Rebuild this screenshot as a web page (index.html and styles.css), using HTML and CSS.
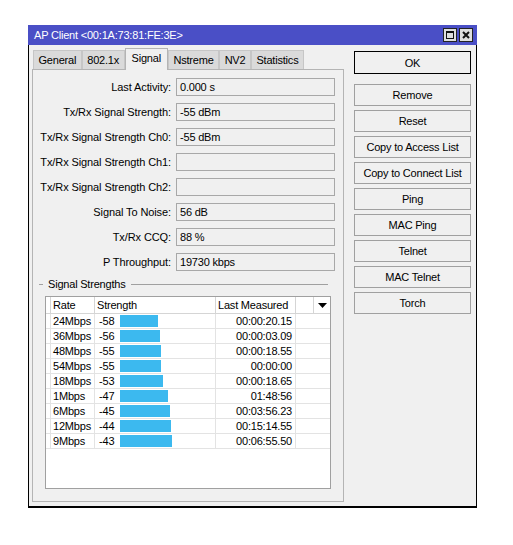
FILE: index.html
```html
<!DOCTYPE html>
<html>
<head>
<meta charset="utf-8">
<link rel="stylesheet" href="styles.css">
</head>
<body>
<div class="window">
  <div class="titlebar">
    <span class="title">AP Client &lt;00:1A:73:81:FE:3E&gt;</span>
    <div class="tbtns">
      <span class="tbtn"><svg width="12" height="12" viewBox="0 0 12 12"><rect x="2.5" y="2.5" width="7" height="7" fill="none" stroke="#111" stroke-width="1"/><rect x="2" y="2" width="8" height="2" fill="#111"/></svg></span>
      <span class="tbtn"><svg width="12" height="12" viewBox="0 0 12 12"><path d="M3 3 L9 9 M9 3 L3 9" stroke="#111" stroke-width="2" fill="none"/></svg></span>
    </div>
  </div>
  <div class="body">
    <div class="left">
      <div class="tabs">
        <div class="tab">General</div>
        <div class="tab">802.1x</div>
        <div class="tab active">Signal</div>
        <div class="tab">Nstreme</div>
        <div class="tab">NV2</div>
        <div class="tab">Statistics</div>
      </div>
      <div class="panel">
        <div class="form">
          <div class="row"><span class="lbl">Last Activity:</span><span class="field">0.000 s</span></div>
          <div class="row"><span class="lbl">Tx/Rx Signal Strength:</span><span class="field">-55 dBm</span></div>
          <div class="row"><span class="lbl">Tx/Rx Signal Strength Ch0:</span><span class="field">-55 dBm</span></div>
          <div class="row"><span class="lbl">Tx/Rx Signal Strength Ch1:</span><span class="field"></span></div>
          <div class="row"><span class="lbl">Tx/Rx Signal Strength Ch2:</span><span class="field"></span></div>
          <div class="row"><span class="lbl">Signal To Noise:</span><span class="field">56 dB</span></div>
          <div class="row"><span class="lbl">Tx/Rx CCQ:</span><span class="field">88 %</span></div>
          <div class="row"><span class="lbl">P Throughput:</span><span class="field">19730 kbps</span></div>
        </div>
        <div class="group">
          <div class="ghead"><span class="gdash"></span><span class="glabel">Signal Strengths</span><span class="gline"></span></div>
          <div class="list">
            <div class="lhead">
              <div></div>
              <div>Rate</div>
              <div>Strength</div>
              <div>Last Measured</div>
              <div></div>
              <div class="arrow"><svg width="9" height="5" viewBox="0 0 9 5"><polygon points="0,0 9,0 4.5,5" fill="#000"/></svg></div>
            </div>
            <div class="lrow"><div></div><div class="c-rate">24Mbps</div><div class="c-str"><span class="sval">-58</span><span class="bar" style="width:38px"></span></div><div class="c-time">00:00:20.15</div><div></div></div>
            <div class="lrow"><div></div><div class="c-rate">36Mbps</div><div class="c-str"><span class="sval">-56</span><span class="bar" style="width:40px"></span></div><div class="c-time">00:00:03.09</div><div></div></div>
            <div class="lrow"><div></div><div class="c-rate">48Mbps</div><div class="c-str"><span class="sval">-55</span><span class="bar" style="width:41px"></span></div><div class="c-time">00:00:18.55</div><div></div></div>
            <div class="lrow"><div></div><div class="c-rate">54Mbps</div><div class="c-str"><span class="sval">-55</span><span class="bar" style="width:41px"></span></div><div class="c-time">00:00:00</div><div></div></div>
            <div class="lrow"><div></div><div class="c-rate">18Mbps</div><div class="c-str"><span class="sval">-53</span><span class="bar" style="width:43px"></span></div><div class="c-time">00:00:18.65</div><div></div></div>
            <div class="lrow"><div></div><div class="c-rate">1Mbps</div><div class="c-str"><span class="sval">-47</span><span class="bar" style="width:48px"></span></div><div class="c-time">01:48:56</div><div></div></div>
            <div class="lrow"><div></div><div class="c-rate">6Mbps</div><div class="c-str"><span class="sval">-45</span><span class="bar" style="width:50px"></span></div><div class="c-time">00:03:56.23</div><div></div></div>
            <div class="lrow"><div></div><div class="c-rate">12Mbps</div><div class="c-str"><span class="sval">-44</span><span class="bar" style="width:51px"></span></div><div class="c-time">00:15:14.55</div><div></div></div>
            <div class="lrow"><div></div><div class="c-rate">9Mbps</div><div class="c-str"><span class="sval">-43</span><span class="bar" style="width:52px"></span></div><div class="c-time">00:06:55.50</div><div></div></div>
          </div>
        </div>
      </div>
    </div>
    <div class="actions">
      <button class="btn default">OK</button>
      <button class="btn">Remove</button>
      <button class="btn">Reset</button>
      <button class="btn">Copy to Access List</button>
      <button class="btn">Copy to Connect List</button>
      <button class="btn">Ping</button>
      <button class="btn">MAC Ping</button>
      <button class="btn">Telnet</button>
      <button class="btn">MAC Telnet</button>
      <button class="btn">Torch</button>
    </div>
  </div>
</div>
</body>
</html>
```

FILE: styles.css
```css
* { box-sizing: border-box; }

body {
  margin: 0;
  background: #fff;
  font-family: "Liberation Sans", Arial, sans-serif;
  font-size: 11px;
  letter-spacing: -0.2px;
  color: #000;
}

.window {
  width: 449px;
  margin: 25px 0 0 28px;
}

.titlebar {
  height: 20px;
  background: #4a4fc6;
  color: #fff;
  display: flex;
  align-items: center;
  justify-content: space-between;
  padding: 0 4px 0 6px;
}

.title { line-height: 20px; }

.tbtns { display: flex; gap: 2px; }

.tbtn {
  width: 14px;
  height: 14px;
  border: 1px solid #222;
  background: #dedede;
  display: flex;
}

.body {
  display: flex;
  gap: 10px;
  padding: 3px 5px 4px 3px;
  border: 1px solid #000;
  border-top: 0;
  border-bottom-width: 2px;
  background: #f0f0f0;
}

.left { width: 312px; }

.tabs {
  display: flex;
  align-items: flex-end;
  height: 21px;
  padding-left: 1px;
}

.tab {
  padding: 1px 4.5px 0;
  line-height: 17px;
  border: 1px solid #c6c6c6;
  border-bottom: 0;
  background: #dadada;
  white-space: nowrap;
}

.tab.active {
  padding: 0 6px 2px;
  line-height: 19px;
  background: #f0f0f0;
  border-color: #b4b4b4;
  margin-bottom: -1px;
  position: relative;
}

.panel {
  height: 433px;
  border: 1px solid #b4b4b4;
  padding: 8px 7px 0 0;
}

.form {
  display: flex;
  flex-direction: column;
  gap: 7px;
}

.row {
  display: grid;
  grid-template-columns: 138px 159px;
  column-gap: 5px;
  align-items: center;
}

.lbl {
  text-align: right;
  white-space: nowrap;
  letter-spacing: -0.1px;
}

.field {
  height: 18px;
  border: 1px solid #a8a8a8;
  padding: 0 3px;
  line-height: 16px;
  background: #f0f0f0;
}

.group { margin: 6px 8px 0 6px; }

.ghead {
  display: flex;
  align-items: center;
  height: 15px;
}

.gdash {
  width: 4px;
  height: 1px;
  background: #a0a0a0;
}

.glabel {
  margin: 0 5px;
  line-height: 15px;
}

.gline {
  flex: 1;
  height: 1px;
  background: #a0a0a0;
}

.list {
  margin: 4px 0 0 6px;
  width: 286px;
  height: 193px;
  border: 1px solid #a0a0a0;
  background: #fff;
}

.lhead {
  display: grid;
  grid-template-columns: 5px 44px 121px 80px 18px 1fr;
  height: 17px;
  border-bottom: 1px solid #d5d5d5;
}

.lhead > div {
  border-right: 1px solid #d5d5d5;
  padding-left: 2px;
  line-height: 16px;
  white-space: nowrap;
}

.lhead > div:last-child { border-right: 0; }

.lhead .arrow {
  display: flex;
  align-items: center;
  justify-content: center;
  padding: 0;
}

.lrow {
  display: grid;
  grid-template-columns: 5px 44px 121px 80px 1fr;
  height: 15px;
  border-bottom: 1px solid #e3e3e3;
}

.lrow > div {
  border-right: 1px solid #e3e3e3;
  line-height: 14px;
  white-space: nowrap;
}

.lrow > div:last-child { border-right: 0; }

.c-rate { padding-left: 2px; }

.lrow .c-str {
  display: flex;
  align-items: center;
  padding-left: 4px;
}

.sval { width: 21px; flex: none; }

.bar {
  height: 12px;
  background: #3cb9ef;
  flex: none;
}

.c-time {
  text-align: right;
  padding-right: 3px;
}

.actions {
  width: 117px;
  display: flex;
  flex-direction: column;
  gap: 4px;
  padding-top: 3px;
}

.btn {
  height: 22px;
  border: 1px solid #a0a0a0;
  background: #f0f0f0;
  font: inherit;
  letter-spacing: inherit;
  color: #000;
  padding: 0;
  margin: 0;
  display: flex;
  align-items: center;
  justify-content: center;
  white-space: nowrap;
}

.btn.default {
  height: 23px;
  border-color: #000;
  margin-bottom: 6px;
}
```
